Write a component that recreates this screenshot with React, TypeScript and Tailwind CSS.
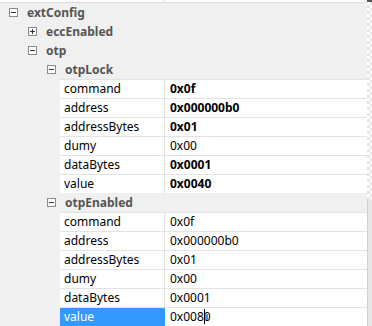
import type { ReactNode } from 'react';

type Prop = { name: string; value: string; bold?: boolean };

const otpLock: Prop[] = [
  { name: 'command', value: '0x0f', bold: true },
  { name: 'address', value: '0x000000b0', bold: true },
  { name: 'addressBytes', value: '0x01', bold: true },
  { name: 'dumy', value: '0x00' },
  { name: 'dataBytes', value: '0x0001', bold: true },
  { name: 'value', value: '0x0040', bold: true },
];

const otpEnabled: Prop[] = [
  { name: 'command', value: '0x0f' },
  { name: 'address', value: '0x000000b0' },
  { name: 'addressBytes', value: '0x01' },
  { name: 'dumy', value: '0x00' },
  { name: 'dataBytes', value: '0x0001' },
];

function Toggle({ open }: { open: boolean }) {
  return (
    <svg width="9" height="9" viewBox="0 0 9 9" className="shrink-0">
      <rect x="0.5" y="0.5" width="8" height="8" fill="#fff" stroke="#8a8a8a" />
      <path d="M2 4.5h5" stroke="#333" />
      {!open && <path d="M4.5 2v5" stroke="#333" />}
    </svg>
  );
}

function Group({ indent, open, label }: { indent: string; open: boolean; label: string }) {
  return (
    <div className={`flex h-[19px] items-center gap-[9px] ${indent}`}>
      <Toggle open={open} />
      <span className="font-bold text-[#555]">{label}</span>
    </div>
  );
}

function PropRow({ name, children, selected }: { name: string; children: ReactNode; selected?: boolean }) {
  return (
    <div className="ml-[60px] flex h-[19px] border-t border-[#e3e3e3] bg-white">
      <div
        className={`flex w-[105px] items-center border-r pl-1 ${
          selected ? 'border-[#3399ff] bg-[#3399ff] text-white' : 'border-[#e3e3e3] text-black'
        }`}
      >
        {name}
      </div>
      <div className="flex flex-1 items-center pl-[5px] text-black">{children}</div>
    </div>
  );
}

export default function App() {
  return (
    <div className="flex h-[326px] w-[372px] overflow-hidden bg-[#f0f0f0] text-[12px] leading-none [font-family:'Noto_Sans',sans-serif]">
      <div className="w-[367px]">
        <div className="flex h-[3px] border-b border-[#dcdcdc] bg-white">
          <div className="w-[165px] border-r border-[#dcdcdc]" />
        </div>
        <Group indent="pl-[9px]" open label="extConfig" />
        <Group indent="pl-[28px]" open={false} label="eccEnabled" />
        <Group indent="pl-[28px]" open label="otp" />
        <Group indent="pl-[47px]" open label="otpLock" />
        {otpLock.map((p) => (
          <PropRow key={p.name} name={p.name}>
            <span className={p.bold ? 'font-bold' : ''}>{p.value}</span>
          </PropRow>
        ))}
        <Group indent="pl-[47px]" open label="otpEnabled" />
        {otpEnabled.map((p) => (
          <PropRow key={p.name} name={p.name}>
            {p.value}
          </PropRow>
        ))}
        <PropRow name="value" selected>
          <span>0x008</span>
          <span className="relative">
            <span className="absolute left-0 top-[-2px] h-[15px] w-px bg-black" />
            <span className="absolute left-px top-[3px] h-[6px] w-[3px] bg-[#3399ff]" />
            0
          </span>
        </PropRow>
      </div>
      <div className="flex w-[5px] flex-col">
        <div className="h-[2px] bg-[#555]" />
        <div className="h-[197px] bg-[repeating-conic-gradient(#e6e6e6_0_25%,#ffffff_0_50%)] bg-[length:6px_6px]" />
        <div className="flex-1 border-l border-[#d0d0d0] bg-[#e8e8e8]" />
      </div>
    </div>
  );
}
